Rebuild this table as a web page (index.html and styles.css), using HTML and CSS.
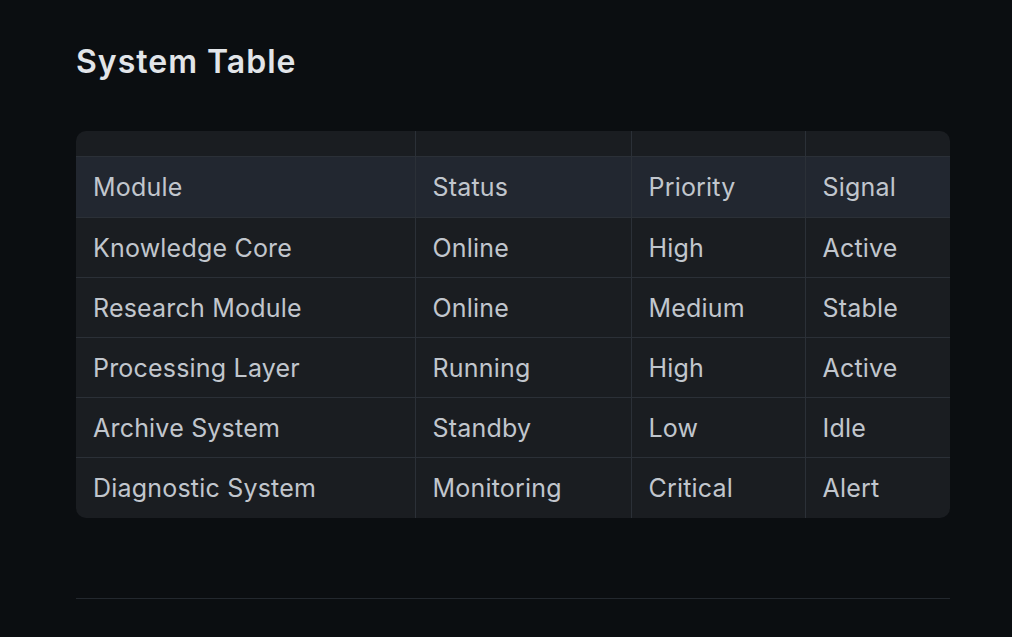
FILE: index.html
```html
<!DOCTYPE html>
<html>
<head>
<meta charset="utf-8">
<link rel="stylesheet" href="styles.css">
</head>
<body>
<main class="page">
  <h1 class="title">System Table</h1>
  <div class="table-wrap">
    <table class="grid">
      <colgroup>
        <col class="c1"><col class="c2"><col class="c3"><col class="c4">
      </colgroup>
      <thead>
        <tr class="spacer"><th></th><th></th><th></th><th></th></tr>
        <tr class="head"><th>Module</th><th>Status</th><th>Priority</th><th>Signal</th></tr>
      </thead>
      <tbody>
        <tr><td>Knowledge Core</td><td>Online</td><td>High</td><td>Active</td></tr>
        <tr><td>Research Module</td><td>Online</td><td>Medium</td><td>Stable</td></tr>
        <tr><td>Processing Layer</td><td>Running</td><td>High</td><td>Active</td></tr>
        <tr><td>Archive System</td><td>Standby</td><td>Low</td><td>Idle</td></tr>
        <tr><td>Diagnostic System</td><td>Monitoring</td><td>Critical</td><td>Alert</td></tr>
      </tbody>
    </table>
  </div>
  <hr class="rule">
</main>
</body>
</html>
```
FILE: styles.css
```css
html, body {
  margin: 0;
  padding: 0;
  background: #0b0e11;
}
body {
  font-family: Inter, "Liberation Sans", sans-serif;
  color: #c1c6cd;
}
.page {
  padding: 40px 62px 0 76px;
}
.title {
  margin: 0;
  font-size: 32px;
  font-weight: 600;
  color: #e2e5e9;
  line-height: 44px;
  letter-spacing: 1px;
}
.table-wrap {
  margin-top: 47px;
  width: 874px;
  background: #1a1d21;
  border-radius: 10px;
  overflow: hidden;
}
.grid {
  width: 100%;
  border-collapse: collapse;
  table-layout: fixed;
}
.c1 { width: 339px; }
.c2 { width: 216px; }
.c3 { width: 174px; }
.c4 { width: 145px; }
.grid th, .grid td {
  text-align: left;
  font-weight: 400;
  font-size: 25px;
  padding: 0 12px 0 17px;
  height: 59px;
  border-left: 1px solid #2b3037;
  border-bottom: 1px solid #2b3037;
  white-space: nowrap;
  letter-spacing: 0.2px;
}
.grid tr > :first-child { border-left: none; }
.grid tbody tr:last-child td { border-bottom: none; height: 60px; }
.grid .spacer th {
  height: 25px;
  padding: 0;
}
.grid .head th {
  background: #222730;
  height: 60px;
}
.rule {
  margin: 80px 0 0;
  width: 874px;
  border: none;
  border-top: 1px solid #23282e;
}
```
